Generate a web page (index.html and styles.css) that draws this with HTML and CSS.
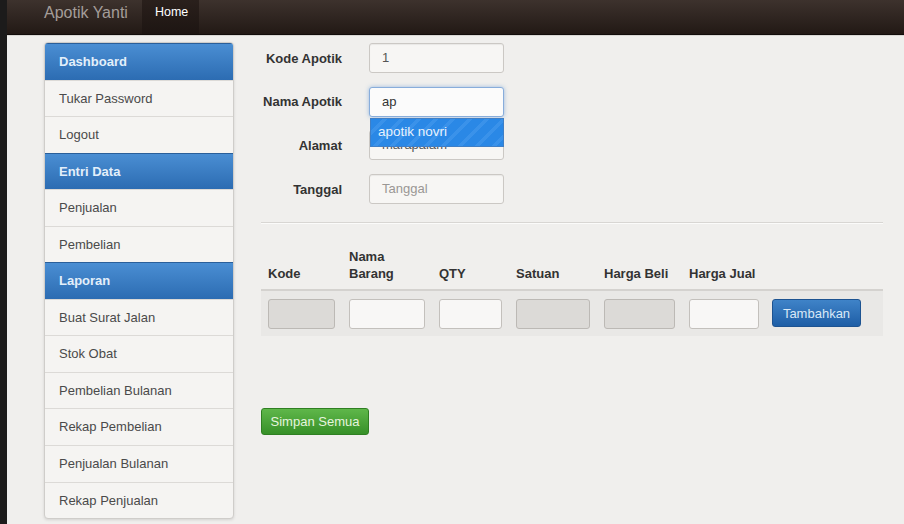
FILE: index.html
```html
<!DOCTYPE html>
<html>
<head>
<meta charset="utf-8">
<link rel="stylesheet" href="styles.css">
</head>
<body>
<div class="navbar">
  <span class="brand">Apotik Yanti</span>
  <span class="nav-tab">Home</span>
</div>
<div class="page">
  <ul class="sidebar">
    <li class="head">Dashboard</li>
    <li>Tukar Password</li>
    <li>Logout</li>
    <li class="head">Entri Data</li>
    <li>Penjualan</li>
    <li>Pembelian</li>
    <li class="head">Laporan</li>
    <li>Buat Surat Jalan</li>
    <li>Stok Obat</li>
    <li>Pembelian Bulanan</li>
    <li>Rekap Pembelian</li>
    <li>Penjualan Bulanan</li>
    <li>Rekap Penjualan</li>
  </ul>
  <div class="main">
    <div class="form">
      <div class="row"><label>Kode Apotik</label><div class="input">1</div></div>
      <div class="row"><label>Nama Apotik</label><div class="input focus">ap</div></div>
      <div class="row"><label>Alamat</label><div class="field-wrap"><div class="input">marapalam</div><div class="suggest">apotik novri</div></div></div>
      <div class="row"><label>Tanggal</label><div class="input placeholder">Tanggal</div></div>
    </div>
    <div class="divider"></div>
    <div class="grid">
      <div class="th">Kode</div>
      <div class="th">Nama<br>Barang</div>
      <div class="th">QTY</div>
      <div class="th">Satuan</div>
      <div class="th">Harga Beli</div>
      <div class="th">Harga Jual</div>
      <div class="th"></div>
      <div class="td"><div class="cell disabled w67"></div></div>
      <div class="td"><div class="cell w76"></div></div>
      <div class="td"><div class="cell w63"></div></div>
      <div class="td"><div class="cell disabled w74"></div></div>
      <div class="td"><div class="cell disabled w71"></div></div>
      <div class="td"><div class="cell w70"></div></div>
      <div class="td"><span class="btn blue">Tambahkan</span></div>
    </div>
    <div class="save"><span class="btn green">Simpan Semua</span></div>
  </div>
</div>
</body>
</html>
```

FILE: styles.css
```css
html, body {
  margin: 0;
  padding: 0;
}
body {
  width: 904px;
  height: 524px;
  overflow: hidden;
  background: #f0efed;
  border-left: 7px solid #1c1b1b;
  box-sizing: border-box;
  font-family: "Liberation Sans", Arial, sans-serif;
  font-size: 13px;
  color: #333;
}
.navbar {
  height: 34px;
  background: linear-gradient(#3d322d, #221915);
  border-bottom: 1px solid #120d0b;
  box-shadow: 0 1px 0 #d9d7d4;
  display: flex;
  align-items: stretch;
  padding-left: 37px;
}
.brand {
  color: #a49d99;
  font-size: 16px;
  line-height: 26px;
  margin-right: 14px;
}
.nav-tab {
  background: linear-gradient(#2a201c, #1d1512);
  color: #fff;
  padding: 0 13px;
  line-height: 25px;
  font-size: 12.5px;
  width: 31px;
}
.page {
  display: flex;
  padding: 7px 0 0 37px;
}
.sidebar {
  list-style: none;
  margin: 0;
  padding: 0;
  width: 188px;
  border: 1px solid #cfcdca;
  border-radius: 4px;
  background: #f5f4f2;
  box-shadow: 0 1px 3px rgba(0,0,0,0.12);
  overflow: hidden;
  flex: none;
}
.sidebar li {
  height: 36.55px;
  line-height: 35px;
  padding-left: 14px;
  border-top: 1px solid #dcdad7;
  box-sizing: border-box;
  color: #4a4a4a;
  font-size: 13px;
}
.sidebar li:first-child {
  border-top: none;
}
.sidebar li.head {
  background: linear-gradient(#4a8ed3, #2c6cb2);
  border-top: 1px solid #2a5f9a;
  color: #e3effa;
  font-weight: bold;
}
.main {
  margin-left: 27px;
  width: 622px;
}
.form {
  padding: 1px 0 0;
  display: flex;
  flex-direction: column;
  gap: 13.7px;
}
.row {
  display: flex;
  align-items: center;
  height: 30px;
}
.row label {
  width: 81px;
  text-align: right;
  font-weight: bold;
  color: #333;
  margin-right: 27px;
}
.input {
  height: 28px;
  border: 1px solid #cbc8c4;
  border-radius: 3px;
  background: #f7f6f4;
  box-sizing: content-box;
  padding-left: 12px;
  line-height: 28px;
  color: #555;
  font-size: 13px;
  box-shadow: inset 0 1px 1px rgba(0,0,0,0.06);
  width: 121px;
}
.input.focus {
  border-color: #88addb;
  box-shadow: 0 0 4px rgba(82,140,210,0.55);
  background: #fbfbfb;
  color: #333;
}
.input.placeholder {
  color: #9a9794;
}
.field-wrap {
  position: relative;
}
.suggest {
  position: absolute;
  left: 1px;
  top: -12px;
  width: 125px;
  height: 27px;
  padding-left: 7px;
  line-height: 26px;
  color: #e8f2fd;
  font-size: 13.5px;
  border: 1px solid #3f7fc6;
  box-sizing: content-box;
  background: repeating-linear-gradient(135deg, #2a88e6 0 8px, #3a92ea 8px 12px);
}
.divider {
  margin-top: 18px;
  border-top: 1px solid #d8d6d3;
  border-bottom: 1px solid #fbfbfa;
}
.grid {
  margin-top: 24px;
  display: grid;
  grid-template-columns: 81px 90px 77px 88px 85px 83px 118px;
}
.th {
  display: flex;
  align-items: flex-end;
  padding: 0 0 7px 7px;
  font-weight: bold;
  color: #333;
  line-height: 17px;
  border-bottom: 2px solid #d4d2cf;
}
.td {
  background: #e9e8e6;
  height: 45px;
  display: flex;
  align-items: center;
  padding-left: 7px;
}
.cell {
  border: 1px solid #c3c0bc;
  border-radius: 3px;
  background: #f8f7f6;
  box-sizing: border-box;
  height: 30px;
}
.cell.disabled {
  background: #dcdad7;
  border-color: #bcb9b5;
}
.w67 { width: 67px; }
.w76 { width: 76px; }
.w63 { width: 63px; }
.w74 { width: 74px; }
.w71 { width: 71px; }
.w70 { width: 70px; }
.btn {
  display: inline-block;
  border-radius: 3px;
  font-size: 13px;
  text-align: center;
  box-sizing: border-box;
}
.btn.blue {
  width: 89px;
  height: 28px;
  line-height: 27px;
  margin-top: -2px;
  background: linear-gradient(#3f83c8, #1e5ea6);
  border: 1px solid #1d5391;
  color: #d9e8f6;
}
.save {
  margin-top: 72px;
}
.btn.green {
  width: 108px;
  height: 27px;
  line-height: 26px;
  background: linear-gradient(#5fb74a, #379028);
  border: 1px solid #2f7f22;
  color: #e6f4de;
}
```
